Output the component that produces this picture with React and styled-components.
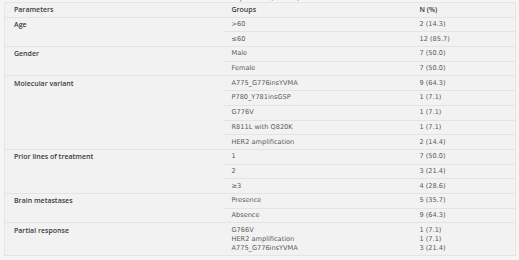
import React from "react";
import styled, { createGlobalStyle } from "styled-components";

const Global = createGlobalStyle`
  html, body { margin: 0; padding: 0; background: #f5f5f5; }
  body { font-family: "DejaVu Sans", "Open Sans", sans-serif; }
`;

const Page = styled.div`
  width: 519px;
  height: 260px;
  overflow: hidden;
  padding: 0 4px;
  box-sizing: border-box;
`;

const Caption = styled.div`
  height: 2px;
  overflow: hidden;
  padding-left: 112px;
  font-size: 7px;
  line-height: 9px;
  color: #666;
  & > span { display: block; transform: translateY(-6px); }
`;

const Table = styled.table`
  width: 511px;
  border-collapse: collapse;
  background: #f2f2f2;
  border: 1px solid #e6e6e6;
  font-size: 6.6px;
  line-height: 9px;
  color: #5a5a5a;
  table-layout: fixed;
`;

const Th = styled.th`
  text-align: left;
  font-family: "Open Sans", "DejaVu Sans", sans-serif;
  font-size: 7px;
  font-weight: 600;
  color: #3a3a3a;
  padding: 2.35px 9px;
  border-bottom: 1px solid #e4e4e4;
`;

const Td = styled.td`
  padding: 2.35px 9px;
  vertical-align: top;
  border-bottom: 1px solid #e4e4e4;
  font-family: ${(p) =>
    p.$label ? '"Open Sans", "DejaVu Sans", sans-serif' : '"DejaVu Sans", sans-serif'};
  font-size: ${(p) => (p.$label ? "7px" : "6.6px")};
  font-weight: ${(p) => (p.$label ? 600 : 400)};
  color: ${(p) => (p.$label ? "#3a3a3a" : "#5a5a5a")};
`;

const Lines = styled.div`
  display: flex;
  flex-direction: column;
`;

const data = [
  { label: "Age", rows: [[">60", "2 (14.3)"], ["≤60", "12 (85.7)"]] },
  { label: "Gender", rows: [["Male", "7 (50.0)"], ["Female", "7 (50.0)"]] },
  {
    label: "Molecular variant",
    rows: [
      ["A775_G776insYVMA", "9 (64.3)"],
      ["P780_Y781insGSP", "1 (7.1)"],
      ["G776V", "1 (7.1)"],
      ["R811L with Q820K", "1 (7.1)"],
      ["HER2 amplification", "2 (14.4)"],
    ],
  },
  {
    label: "Prior lines of treatment",
    rows: [["1", "7 (50.0)"], ["2", "3 (21.4)"], ["≥3", "4 (28.6)"]],
  },
  {
    label: "Brain metastases",
    rows: [["Presence", "5 (35.7)"], ["Absence", "9 (64.3)"]],
  },
];

export default function App() {
  return (
    <>
      <Global />
      <Page>
        <Caption>
          <span>Table 1. Baseline characteristics of patients (n = 14)</span>
        </Caption>
        <Table>
          <colgroup>
            <col style={{ width: 218 }} />
            <col style={{ width: 188 }} />
            <col style={{ width: 105 }} />
          </colgroup>
          <thead>
            <tr>
              <Th>Parameters</Th>
              <Th>Groups</Th>
              <Th>N (%)</Th>
            </tr>
          </thead>
          <tbody>
            {data.map((g) =>
              g.rows.map((r, i) => (
                <tr key={g.label + i}>
                  {i === 0 && (
                    <Td $label rowSpan={g.rows.length}>
                      {g.label}
                    </Td>
                  )}
                  <Td>{r[0]}</Td>
                  <Td>{r[1]}</Td>
                </tr>
              ))
            )}
            <tr>
              <Td $label>Partial response</Td>
              <Td>
                <Lines>
                  <span>G766V</span>
                  <span>HER2 amplification</span>
                  <span>A775_G776insYVMA</span>
                </Lines>
              </Td>
              <Td>
                <Lines>
                  <span>1 (7.1)</span>
                  <span>1 (7.1)</span>
                  <span>3 (21.4)</span>
                </Lines>
              </Td>
            </tr>
          </tbody>
        </Table>
      </Page>
    </>
  );
}
